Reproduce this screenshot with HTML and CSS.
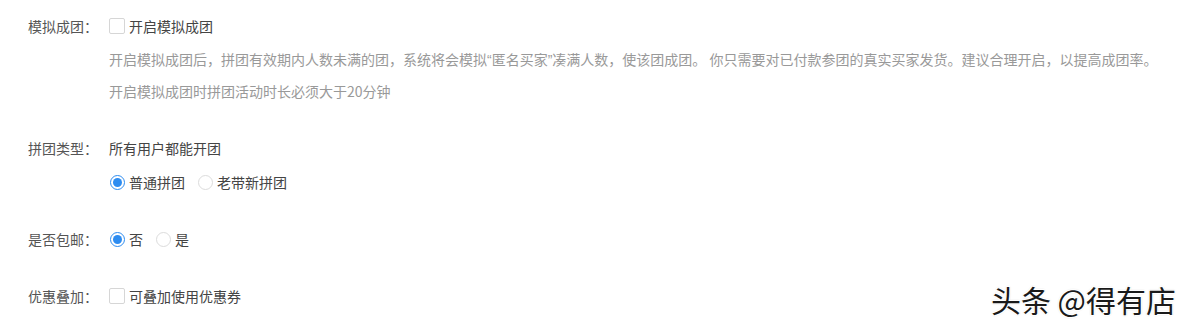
FILE: index.html
```html
<!DOCTYPE html>
<html lang="zh-CN">
<head>
<meta charset="utf-8">
<title>拼团设置</title>
<link rel="stylesheet" href="styles.css">
</head>
<body>
<div class="form">
  <div class="row row-first">
    <div class="label">模拟成团：</div>
    <div class="content">
      <label class="option"><span class="checkbox"></span><span>开启模拟成团</span></label>
      <div class="desc">
        <p>开启模拟成团后，拼团有效期内人数未满的团，系统将会模拟<span class="q">“</span>匿名买家<span class="q">”</span>凑满人数，使该团成团。 你只需要对已付款参团的真实买家发货。建议合理开启，以提高成团率。</p>
        <p>开启模拟成团时拼团活动时长必须大于20分钟</p>
      </div>
    </div>
  </div>
  <div class="row row-second">
    <div class="label">拼团类型：</div>
    <div class="content">
      <div class="text">所有用户都能开团</div>
      <div class="radios radios-sub">
        <label class="option"><span class="radio checked"></span><span>普通拼团</span></label>
        <label class="option"><span class="radio"></span><span>老带新拼团</span></label>
      </div>
    </div>
  </div>
  <div class="row row-third">
    <div class="label">是否包邮：</div>
    <div class="content">
      <div class="radios">
        <label class="option"><span class="radio checked"></span><span>否</span></label>
        <label class="option"><span class="radio"></span><span>是</span></label>
      </div>
    </div>
  </div>
  <div class="row row-fourth">
    <div class="label">优惠叠加：</div>
    <div class="content">
      <label class="option"><span class="checkbox"></span><span>可叠加使用优惠券</span></label>
    </div>
  </div>
</div>
<div class="watermark">头条 @得有店</div>
</body>
</html>
```
FILE: styles.css
```css
html, body {
  margin: 0;
  padding: 0;
  background: #fff;
}
body {
  width: 1188px;
  height: 325px;
  position: relative;
  overflow: hidden;
  font-family: "Noto Sans CJK SC", "Noto Sans", sans-serif;
  font-size: 14px;
  color: #555;
}
.form {
  padding: 16px 0 0 28px;
  display: flex;
  flex-direction: column;
}
.row {
  display: flex;
  align-items: flex-start;
}
.row-second { margin-top: 31px; }
.row-third { margin-top: 37px; }
.row-fourth { margin-top: 37px; }
.label {
  width: 81px;
  flex: none;
  line-height: 20px;
  color: #555;
}
.content {
  display: flex;
  flex-direction: column;
}
.text {
  line-height: 20px;
  color: #444;
}
.option {
  display: inline-flex;
  align-items: center;
  line-height: 20px;
  color: #444;
  margin-right: 12px;
}
.checkbox {
  width: 14px;
  height: 14px;
  border: 1px solid #d6d6d6;
  border-radius: 2px;
  margin: 0 4px 0 0;
  background: #fff;
  box-sizing: content-box;
}
.radio {
  width: 13px;
  height: 13px;
  border: 1px solid #dcdcdc;
  border-radius: 50%;
  margin: 0 4px 0 1px;
  background: #fff;
  box-sizing: content-box;
  position: relative;
}
.radio.checked {
  border-color: #2d8cf0;
}
.radio.checked::after {
  content: "";
  position: absolute;
  left: 2px;
  top: 2px;
  width: 9px;
  height: 9px;
  border-radius: 50%;
  background: #2d8cf0;
}
.radios {
  display: flex;
}
.radios-sub {
  margin-top: 14px;
}
.desc {
  margin-top: 8px;
  color: #999;
  line-height: 31px;
}
.desc p {
  margin: 0;
  white-space: nowrap;
}
.q {
  font-family: "Liberation Sans", sans-serif;
}
.watermark {
  position: absolute;
  right: 12px;
  bottom: 9px;
  font-size: 30px;
  line-height: 34px;
  color: #1a1a1a;
  letter-spacing: 0;
  text-shadow: 1px 1px 0 #fff, -1px -1px 0 #fff, 1px -1px 0 #fff, -1px 1px 0 #fff, 0 0 2px #888;
}
```
